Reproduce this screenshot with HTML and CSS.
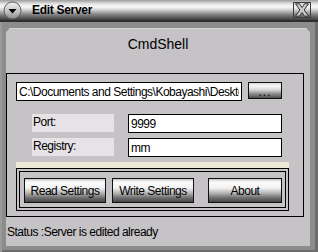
FILE: index.html
```html
<!DOCTYPE html>
<html lang="en">
  <head>
    <meta charset="UTF-8" />
    <title>Edit Server</title>
    <link rel="stylesheet" href="styles.css">
  </head>
  <body>
    <div class="window">
      <div class="titlebar">
        <svg class="menu-icon" viewBox="0 0 19 19" width="19" height="19">
          <defs>
            <linearGradient id="knob" x1="0" y1="0" x2="0" y2="1">
              <stop offset="0" stop-color="#f2f2f2" />
              <stop offset="0.5" stop-color="#c8c8c8" />
              <stop offset="1" stop-color="#8a8a8a" />
            </linearGradient>
          </defs>
          <circle cx="9.5" cy="9.5" r="8.5" fill="url(#knob)" stroke="#5a5a5a" />
          <polygon points="5.5,8 13.5,8 9.5,12.5" fill="#000" />
        </svg>
        <span class="title">Edit Server</span>
        <svg class="close" viewBox="0 0 18 16" width="18" height="16">
          <rect x="0.5" y="0.5" width="17" height="15" fill="none" stroke="#3c3c3c" />
          <polygon
            points="2.5,1.8 6.5,1.8 9,5.5 11.5,1.8 15.5,1.8 11.2,8 15.5,14.2 11.5,14.2 9,10.5 6.5,14.2 2.5,14.2 6.8,8"
            fill="#c8c8c8"
            stroke="#333"
          />
        </svg>
      </div>
      <div class="frame">
        <div class="panel">
          <div class="heading">CmdShell</div>
          <div class="group">
            <div class="path-row">
              <input class="path" value="C:\Documents and Settings\Kobayashi\Desktop\CmdShell.exe" readonly />
              <button class="btn btn-browse">...</button>
            </div>
            <div class="field">
              <span class="label">Port:</span>
              <input class="value" value="9999" />
            </div>
            <div class="field">
              <span class="label">Registry:</span>
              <input class="value" value="mm" />
            </div>
            <div class="divider"></div>
            <div class="actions">
              <button class="btn btn-read">Read Settings</button>
              <button class="btn btn-write">Write Settings</button>
              <button class="btn btn-about">About</button>
            </div>
          </div>
          <div class="status">Status :Server is edited already</div>
        </div>
      </div>
    </div>
  </body>
</html>
```

FILE: styles.css
```css
body {
  margin: 0;
  background: #ffffff;
}
.window {
  width: 318px;
  height: 252px;
  display: flex;
  flex-direction: column;
  font-family: "Liberation Sans", Arial, sans-serif;
  font-size: 12px;
  letter-spacing: -0.5px;
  color: #000;
}
.titlebar {
  height: 20px;
  border-bottom: 2px solid #2e2e2e;
  display: flex;
  align-items: center;
  padding: 0 7px 0 3px;
  background: linear-gradient(
    #9c9c9c 0,
    #e6e6e6 4px,
    #f6f6f6 7px,
    #d0d0d0 10px,
    #8a8a8a 14px,
    #555 18px,
    #3e3e3e 20px
  );
}
.title {
  margin-left: 10px;
  flex: 1;
  font-weight: bold;
  font-size: 12px;
  letter-spacing: -0.3px;
}
.frame {
  flex: 1;
  display: flex;
  padding: 6px 8px 6px 6px;
  background: #8c8c8c;
  box-shadow: inset 2px 0 #9a9a9a, inset -3px 0 #6c6c6c, inset 0 -2px #6c6c6c;
}
.panel {
  flex: 1;
  display: flex;
  flex-direction: column;
  background: #c5c3c6;
  border-top: 1px solid #d6d4d6;
  clip-path: polygon(4px 0, calc(100% - 4px) 0, 100% 4px, 100% 100%, 0 100%, 0 4px);
}
.heading {
  margin-top: 7px;
  line-height: 16px;
  font-size: 14px;
  letter-spacing: 0;
  text-align: center;
}
.group {
  margin-top: 21px;
  width: 298px;
  height: 144px;
  box-sizing: border-box;
  border: 1px solid #000;
  padding: 8px 0 0 9px;
}
.path-row {
  display: flex;
  gap: 6px;
  align-items: flex-start;
  margin-bottom: 13px;
}
input {
  margin: 0;
  height: 19px;
  box-sizing: border-box;
  border: 1px solid #000;
  padding: 0 2px;
  background: #fff;
  font: inherit;
  letter-spacing: inherit;
  color: #000;
  outline: none;
}
.path {
  width: 226px;
}
.field {
  display: flex;
  gap: 14px;
  margin-left: 16px;
}
.field + .field {
  margin-top: 5px;
}
.label {
  width: 82px;
  height: 18px;
  box-sizing: border-box;
  padding: 1px 1px 0;
  background: #e6e2e6;
  line-height: 15px;
}
.value {
  width: 154px;
}
.divider {
  width: 273px;
  height: 6px;
  margin-top: 5px;
  background: #ece9d8;
}
.actions {
  width: 273px;
  height: 43px;
  box-sizing: border-box;
  display: flex;
  align-items: flex-start;
  padding: 10px 0 0 8px;
  box-shadow: inset 0 0 0 1px #000, inset 0 0 0 3px #c5c3c6, inset 0 0 0 4px #000;
}
.btn {
  margin: 0;
  padding: 0;
  border: 1px solid #111;
  box-sizing: border-box;
  font: inherit;
  letter-spacing: inherit;
  white-space: nowrap;
  color: #000;
  background: linear-gradient(
    #c4c4c4 0,
    #fbfbfb 3px,
    #f2f2f2 9px,
    #b4b4b4 14px,
    #6c6c6c 19px,
    #474747 23px
  );
}
.btn-browse {
  width: 34px;
  height: 17px;
  padding-top: 3px;
  line-height: 10px;
  letter-spacing: 1px;
  background: linear-gradient(
    #d8d8d8 0,
    #f8f8f8 3px,
    #d4d4d4 7px,
    #8a8a8a 11px,
    #4c4c4c 15px
  );
}
.btn-read,
.btn-write {
  width: 82px;
  height: 25px;
}
.btn-write {
  margin-left: 6px;
}
.btn-about {
  width: 74px;
  height: 25px;
  margin-left: 14px;
}
.status {
  margin-top: 7px;
  padding-left: 1px;
  line-height: 16px;
}
```
